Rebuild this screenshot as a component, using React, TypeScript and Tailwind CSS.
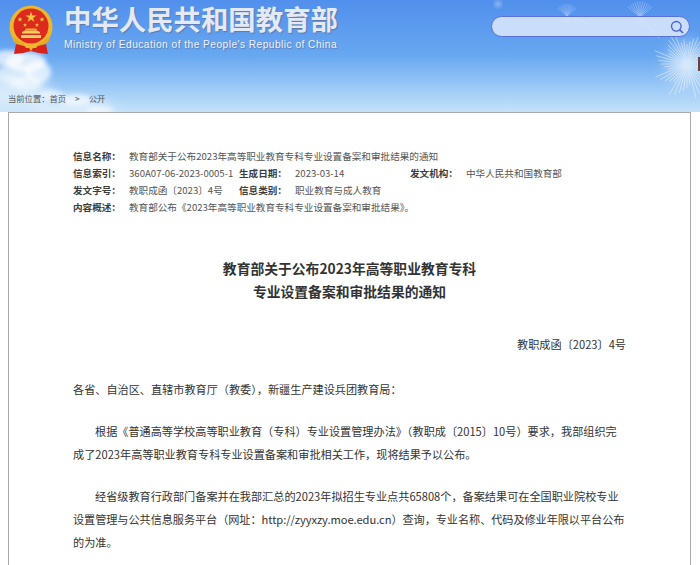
import React from 'react';

const cjk = '"Noto Sans CJK SC", "Liberation Sans", sans-serif';
const latinFirst = '"Liberation Sans", "Noto Sans CJK SC", sans-serif';

function Emblem() {
  return (
    <svg width="46" height="52" viewBox="0 0 46 52" className="absolute left-[9px] top-[4px]">
      <circle cx="22" cy="23" r="21.5" fill="#eeb62c" />
      <circle cx="22" cy="22" r="17.5" fill="#dc2a1e" />
      <path d="M22 7.500l1.300 4h4.200l-3.400 2.500 1.300 4-3.400-2.500-3.400 2.500 1.300-4-3.400-2.500h4.200z" fill="#f2c53a" />
      <path d="M11 13l.7 1.600 1.700.1-1.300 1.100.4 1.700-1.500-.9-1.500.9.4-1.700-1.300-1.100 1.700-.1zM33 13l.7 1.600 1.700.1-1.300 1.100.4 1.700-1.500-.9-1.500.9.4-1.700-1.300-1.100 1.700-.1zM16 19l.6 1.300 1.400.1-1.100.9.4 1.400-1.300-.8-1.300.8.4-1.400-1.100-.9 1.400-.1zM28 19l.6 1.300 1.400.1-1.100.9.4 1.400-1.300-.8-1.300.8.4-1.400-1.100-.9 1.400-.1z" fill="#f2c53a" />
      <path d="M13 28l3-1.500h12l3 1.500v1.500H13zM12 31h20v3H12z" fill="#f3cf63" />
      <path d="M17 24.500h10l1.500 2h-13z" fill="#e9b22f" />
      <path d="M5 33c6 6 12 8 17 8s11-2 17-8l1.500 3c-5 6-12 8-18.500 8S8 42 3.500 36z" fill="#e6ab22" />
      <path d="M7 40l8 2 7 1 7-1 8-2 2 10-9-1-8-2-8 2-9 1z" fill="#d8231b" />
      <path d="M14 40h16l-3 4h-3l-2 3-2-3h-3z" fill="#eeb62c" />
    </svg>
  );
}

function Dandelion({ x, y, s = 1 }: { x: number; y: number; s?: number }) {
  const rays = Array.from({ length: 11 }, (_, i) => -50 + i * 10);
  return (
    <g transform={`translate(${x} ${y}) scale(${s})`} stroke="#fff" strokeWidth="0.5" opacity="0.4">
      {rays.map((a) => (
        <line key={a} x1="0" y1="0" x2="0" y2="-12" transform={`rotate(${a})`} />
      ))}
      {rays.map((a) => (
        <line key={a + 200} x1="0" y1="0" x2="0" y2="-8" transform={`rotate(${a + 180})`} opacity="0.35" />
      ))}
    </g>
  );
}

function HeaderArt() {
  // uneven spoke lengths so the seed head reads as fluff, not a disc
  const spokes = Array.from({ length: 48 }, (_, i) => ({ a: i * 7.5, r: 20 + ((i * 37) % 17) }));
  return (
    <svg width="700" height="112" viewBox="0 0 700 112" className="absolute inset-0">
      <defs>
        <filter id="soft" x="-30%" y="-30%" width="160%" height="160%">
          <feGaussianBlur stdDeviation="2" />
        </filter>
        <filter id="wide" x="-50%" y="-50%" width="200%" height="200%">
          <feGaussianBlur stdDeviation="7" />
        </filter>
        <filter id="softer" x="-30%" y="-30%" width="160%" height="160%">
          <feGaussianBlur stdDeviation="0.600" />
        </filter>
      </defs>
      <g filter="url(#wide)" fill="#e4f1fc">
        <ellipse cx="10" cy="92" rx="40" ry="18" opacity="0.8" />
        <ellipse cx="72" cy="110" rx="42" ry="10" opacity="0.8" />
      </g>
      <g filter="url(#soft)" fill="#fff">
        <ellipse cx="8" cy="58" rx="16" ry="8" opacity="0.7" />
        <ellipse cx="26" cy="62" rx="20" ry="10" opacity="0.75" />
        <ellipse cx="38" cy="72" rx="13" ry="11" opacity="0.7" />
        <ellipse cx="14" cy="74" rx="18" ry="10" opacity="0.55" />
        <ellipse cx="26" cy="84" rx="16" ry="6" opacity="0.5" />
        <ellipse cx="52" cy="95" rx="12" ry="5" opacity="0.55" />
        <ellipse cx="76" cy="100" rx="16" ry="6" opacity="0.6" />
        <ellipse cx="100" cy="110" rx="14" ry="4" opacity="0.5" />
      </g>
      <circle cx="498" cy="4" r="3" fill="#fff" opacity="0.45" filter="url(#soft)" />
      <Dandelion x={567} y={16} />
      <Dandelion x={640} y={17} s={1.300} />
      <path d="M574 18l14 6M641 18l18 20" stroke="#eee8d0" strokeWidth="0.8" opacity="0.8" />
      <circle cx="688" cy="64" r="22" fill="#e6f1fd" opacity="0.5" filter="url(#wide)" />
      <g transform="translate(687 64)" filter="url(#softer)" opacity="0.5">
        {spokes.map(({ a, r }) => (
          <line key={a} x1="0" y1="0" x2="0" y2={-r} stroke="#fff" strokeWidth="0.8" transform={`rotate(${a})`} />
        ))}
      </g>
      <rect x="698" y="57" width="2" height="14" fill="#5b2a2a" opacity="0.85" />
    </svg>
  );
}

function Meta({ label, value, className = '' }: { label: string; value: string; className?: string }) {
  return (
    <div className={`flex ${className}`}>
      <span className="w-[56px] shrink-0 font-bold text-[#3c3c3c]">{label}</span>
      <span className="text-[#555]">{value}</span>
    </div>
  );
}

export default function App() {
  return (
    <div className="w-[700px] h-[565px] overflow-hidden bg-white" style={{ fontFamily: cjk }}>
      <header className="relative h-[112px] bg-gradient-to-b from-[#518fec] via-[#68a8f0] to-[#c4e2f9]">
        <HeaderArt />
        <Emblem />
        <div className="absolute left-[64px] top-[3px]" style={{ fontFamily: latinFirst }}>
          <h1 className="text-[27.4px] leading-[36px] font-bold text-[#e4e9f6] [text-shadow:1px_1px_1px_#5d79ad]">
            中华人民共和国教育部
          </h1>
          <p className="text-[10.2px] leading-[12px] tracking-[0.46px] text-[#eef2fb] [text-shadow:1px_1px_1px_#5d79ad]">
            Ministry of Education of the People's Republic of China
          </p>
        </div>
        <div className="absolute left-[491px] top-[16px] flex h-[21px] w-[199px] items-center justify-end rounded-full border border-[#5b6fd8] bg-[#d6e4fb]/90 pr-[5px]">
          <svg width="14" height="14" viewBox="0 0 14 14" fill="none" stroke="#4a62d8" strokeWidth="1.3">
            <circle cx="6.300" cy="6.300" r="4.800" />
            <path d="M9.800 9.800L13 13" strokeWidth="1.700" />
          </svg>
        </div>
        <nav className="absolute left-[8px] top-[92px] flex text-[8.3px] leading-[12px] text-[#555]">
          <span>当前位置：首页</span>
          <span className="ml-[9px]">&gt;</span>
          <span className="ml-[9px]">公开</span>
        </nav>
      </header>

      <main className="ml-[8px] h-[460px] w-[683px] border border-[#aaa] bg-white pl-[64px] pr-[64px] pt-[35px]">
        <div className="flex flex-col text-[9.6px] leading-[17px]">
          <Meta label="信息名称：" value="教育部关于公布2023年高等职业教育专科专业设置备案和审批结果的通知" />
          <div className="flex">
            <Meta label="信息索引：" value="360A07-06-2023-0005-1" className="w-[166px]" />
            <Meta label="生成日期：" value="2023-03-14" className="w-[171px]" />
            <Meta label="发文机构：" value="中华人民共和国教育部" />
          </div>
          <div className="flex">
            <Meta label="发文字号：" value="教职成函〔2023〕4号" className="w-[166px]" />
            <Meta label="信息类别：" value="职业教育与成人教育" />
          </div>
          <Meta label="内容概述：" value="教育部公布《2023年高等职业教育专科专业设置备案和审批结果》。" />
        </div>

        <h2 className="mt-[41px] text-center text-[13.8px] leading-[23px] font-bold text-[#333]">
          教育部关于公布2023年高等职业教育专科
          <br />
          专业设置备案和审批结果的通知
        </h2>

        <div className="text-[11.15px] leading-[23px] text-[#333]">
          <p className="mt-[30px] text-right">教职成函〔2023〕4号</p>
          <p className="mt-[22px]">各省、自治区、直辖市教育厅（教委），新疆生产建设兵团教育局：</p>
          <p className="mt-[19px] indent-[22px]">
            根据《普通高等学校高等职业教育（专科）专业设置管理办法》（教职成〔2015〕10号）要求，我部组织完
            <br />
            成了2023年高等职业教育专科专业设置备案和审批相关工作，现将结果予以公布。
          </p>
          <p className="-mr-[6px] mt-[19px] indent-[22px]">
            经省级教育行政部门备案并在我部汇总的2023年拟招生专业点共65808个，备案结果可在全国职业院校专业
            <br />
            <span className="tracking-[-0.05px]">设置管理与公共信息服务平台（网址：http://zyyxzy.moe.edu.cn）查询，专业名称、代码及修业年限以平台公布</span>
            <br />
            的为准。
          </p>
        </div>
      </main>
    </div>
  );
}
